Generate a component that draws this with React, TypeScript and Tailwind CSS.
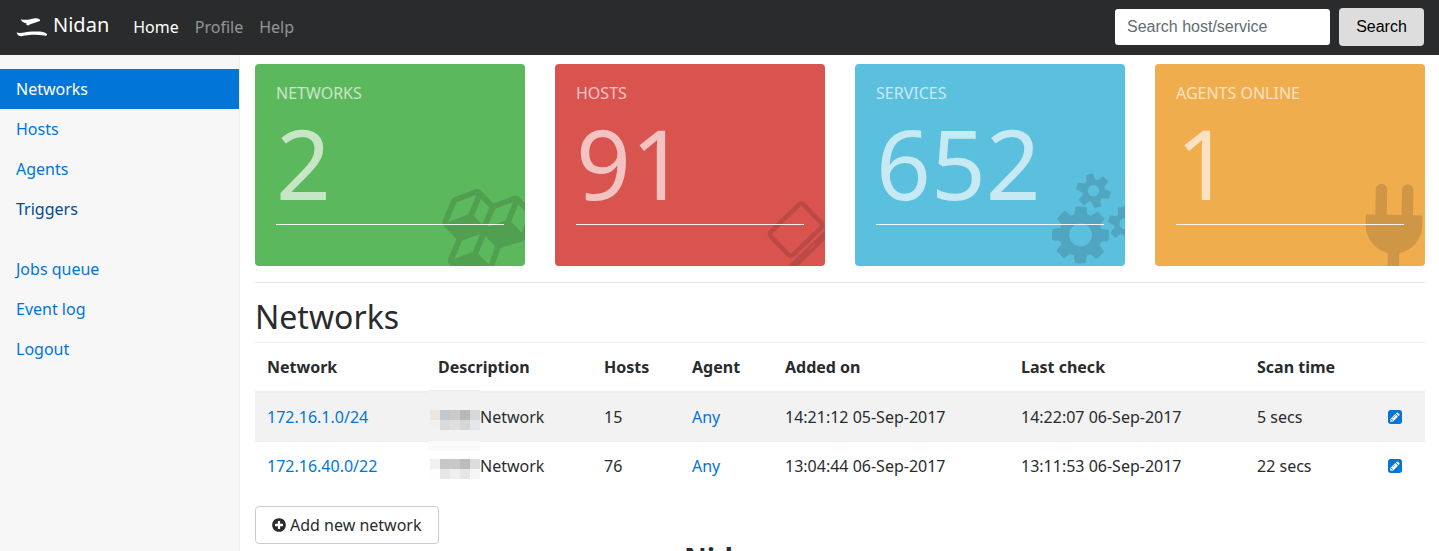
import React from "react";

const CUBES = "M640 1632l384-192v-314l-384 164v342zm-64-454l404-173-404-173-404 173zm1088 454l384-192v-314l-384 164v342zm-64-454l404-173-404-173-404 173zm-448-293l384-165v-266l-384 164v267zm-64-379l441-189-441-189-441 189zm1088 518v416q0 36-19 67t-52 47l-448 224q-25 14-57 14t-57-14l-448-224q-4-2-7-4-2 2-7 4l-448 224q-25 14-57 14t-57-14l-448-224q-33-16-52-47t-19-67v-416q0-38 21.5-70t56.5-48l434-186v-400q0-38 21.5-70t56.5-48l448-192q23-10 50-10t50 10l448 192q35 16 56.5 48t21.5 70v400l434 186q36 16 57 48t21 70z";
const LAPTOP = "M416 1280q-66 0-113-47t-47-113v-704q0-66 47-113t113-47h1088q66 0 113 47t47 113v704q0 66-47 113t-113 47h-1088zm-32-864v704q0 13 9.5 22.5t22.5 9.5h1088q13 0 22.5-9.5t9.5-22.5v-704q0-13-9.5-22.5t-22.5-9.5h-1088q-13 0-22.5 9.5t-9.5 22.5zm1376 928h160v96q0 40-47 68t-113 28h-1600q-66 0-113-28t-47-68v-96h1760zm-720 96q16 0 16-16t-16-16h-160q-16 0-16 16t16 16h160z";
const COGS = "M896 896q0-106-75-181t-181-75-181 75-75 181 75 181 181 75 181-75 75-181zm768 512q0-52-38-90t-90-38-90 38-38 90q0 53 37.5 90.5t90.5 37.5 90.5-37.5 37.5-90.5zm0-1024q0-52-38-90t-90-38-90 38-38 90q0 53 37.5 90.5t90.5 37.5 90.5-37.5 37.5-90.5zm-384 421v185q0 10-7 19.5t-16 10.5l-155 24q-11 35-32 76 34 48 90 115 7 11 7 20 0 12-7 19-23 30-82.5 89.5t-78.5 59.5q-11 0-21-7l-115-90q-37 19-77 31-11 108-23 155-7 24-30 24h-186q-11 0-20-7.5t-10-17.5l-23-153q-34-10-75-31l-118 89q-7 7-20 7-11 0-21-8-144-133-144-160 0-9 7-19 10-14 41-53t47-61q-23-44-35-82l-152-24q-10-1-17-9.5t-7-19.5v-185q0-10 7-19.5t16-10.5l155-24q11-35 32-76-34-48-90-115-7-11-7-20 0-12 7-20 22-30 82-89t79-59q11 0 21 7l115 90q34-18 77-32 11-108 23-154 7-24 30-24h186q11 0 20 7.5t10 17.5l23 153q34 10 75 31l118-89q8-7 20-7 11 0 21 8 144 133 144 160 0 8-7 19-12 16-42 54t-45 60q23 48 34 82l152 23q10 2 17 10.5t7 19.5zm640 533v140q0 16-149 31-12 27-30 52 51 113 51 138 0 4-4 7-122 71-124 71-8 0-46-47t-52-68q-20 2-30 2t-30-2q-14 21-52 68t-46 47q-2 0-124-71-4-3-4-7 0-25 51-138-18-25-30-52-149-15-149-31v-140q0-16 149-31 13-29 30-52-51-113-51-138 0-4 4-7 4-2 35-20t59-34 30-16q8 0 46 46.5t52 67.5q20-2 30-2t30 2q51-71 92-112l6-2q4 0 124 70 4 3 4 7 0 25-51 138 17 23 30 52 149 15 149 31zm0-1024v140q0 16-149 31-12 27-30 52 51 113 51 138 0 4-4 7-122 71-124 71-8 0-46-47t-52-68q-20 2-30 2t-30-2q-14 21-52 68t-46 47q-2 0-124-71-4-3-4-7 0-25 51-138-18-25-30-52-149-15-149-31v-140q0-16 149-31 13-29 30-52-51-113-51-138 0-4 4-7 4-2 35-20t59-34 30-16q8 0 46 46.5t52 67.5q20-2 30-2t30 2q51-71 92-112l6-2q4 0 124 70 4 3 4 7 0 25-51 138 17 23 30 52 149 15 149 31z";
const PLUG = "M1755 453q37 38 37 90.5t-37 90.5l-401 400 150 150-160 160q-163 163-389.5 186.5t-411.5-100.5l-362 362h-181v-181l362-362q-124-185-100.5-411.5t186.5-389.5l160-160 150 150 400-401q38-37 91-37t90 37 37 90.5-37 90.5l-400 401 234 234 401-400q38-37 91-37t90 37z";
const PLUS_CIRCLE = "M1344 960v-128q0-26-19-45t-45-19h-256v-256q0-26-19-45t-45-19h-128q-26 0-45 19t-19 45v256h-256q-26 0-45 19t-19 45v128q0 26 19 45t45 19h256v256q0 26 19 45t45 19h128q26 0 45-19t19-45v-256h256q26 0 45-19t19-45zm320-64q0 209-103 385.5t-279.5 279.5-385.5 103-385.5-103-279.5-279.5-103-385.5 103-385.5 279.5-279.5 385.5-103 385.5 103 279.5 279.5 103 385.5z";
const PENCIL_SQUARE = "M404 980l152 152-52 52h-56v-96h-96v-56zm414-390q14 13-3 30l-291 291q-17 17-30 3-14-13 3-30l291-291q17-17 30-3zm-274 690l544-544-288-288-544 544v288h288zm608-608l92-92q28-28 28-68t-28-68l-152-152q-28-28-68-28t-68 28l-92 92zm384-384v960q0 119-84.5 203.5t-203.5 84.5h-960q-119 0-203.5-84.5t-84.5-203.5v-960q0-119 84.5-203.5t203.5-84.5h960q119 0 203.5 84.5t84.5 203.5z";

const cards = [
  { label: "NETWORKS", value: "2", bg: "bg-[#5cb85c]", box: "0 0 2304 1792", path: CUBES, size: "h-[80px] w-[102.86px]" },
  { label: "HOSTS", value: "91", bg: "bg-[#d9534f]", box: "0 0 1920 1792", path: LAPTOP, size: "h-[64px] w-[68.57px]" },
  { label: "SERVICES", value: "652", bg: "bg-[#5bc0de]", box: "0 0 1920 1792", path: COGS, size: "h-[80px] w-[85.71px]" },
  { label: "AGENTS ONLINE", value: "1", bg: "bg-[#f0ad4e]", box: "0 0 1792 1792", path: PLUG, size: "h-[80px] w-[80px]" },
];

const rows = [
  {
    net: "172.16.1.0/24", hosts: "15", added: "14:21:12 05-Sep-2017", last: "14:22:07 06-Sep-2017", scan: "5 secs",
    mask: ["bg-[#ebe6e1]", "bg-[#c4c8cb]", "bg-[#c9cbcb]", "bg-[#b9b8b6]", "bg-[#d5d8dc]", "bg-[#f1f1f1]", "bg-[#d9dadb]", "bg-[#dfdfdd]", "bg-[#d6d6d6]", "bg-[#e4e6e9]"],
  },
  {
    net: "172.16.40.0/22", hosts: "76", added: "13:04:44 06-Sep-2017", last: "13:11:53 06-Sep-2017", scan: "22 secs",
    mask: ["bg-[#f2f1ec]", "bg-[#c3c9c8]", "bg-[#c7c8c8]", "bg-[#bdbcba]", "bg-[#dcdddd]", "bg-[#fefefe]", "bg-[#e7e7e7]", "bg-[#efefed]", "bg-[#e6e6e5]", "bg-[#f6f6f6]"],
  },
];

const COLS = "grid grid-cols-[171px_166px_88px_93px_236px_236px_131px_49px]";

function NavItem({ children, className = "" }: { children: string; className?: string }) {
  return <a className={`block h-10 px-4 pt-2 leading-6 ${className || "text-[#0275d8]"}`}>{children}</a>;
}

export default function App() {
  return (
    <div className="flex h-[551px] flex-col overflow-hidden bg-white font-['Noto_Sans',sans-serif] text-base leading-6 text-[#292b2c]">
      <header className="flex h-[55px] shrink-0 items-center bg-[#292b2c] pr-[15px] pl-4">
        <svg className="h-[20px] w-[32px] shrink-0" viewBox="0 0 32 20" fill="#fff">
          <path d="M4.6 1.2C8 2.3 13 1.8 17.5 .6C21 -.3 25 .8 23.8 3C20.5 4.6 15.5 5.2 12.2 7.4C10.6 7.2 9.6 6.4 10.8 5.2C8.6 5.4 6 4 4.6 1.2Z" />
          <path d="M.6 14.6C5 15.6 10 14 16 13.6C22 13.2 28.2 13.2 31 16C31.6 17.6 30.2 18 28 17.6C20 16.2 12 16.9 5.5 18.3C3.4 18.5 1 17.2 .6 14.6Z" />
        </svg>
        <span className="ml-[5px] pb-[5px] text-[20px] leading-[30px] text-white">Nidan</span>
        <nav className="ml-6 flex gap-4 pb-[2px]">
          <a className="text-white">Home</a>
          <a className="text-white/50">Profile</a>
          <a className="text-white/50">Help</a>
        </nav>
        <form className="ml-auto flex items-center gap-[9px] pb-[2px] font-['Liberation_Sans',sans-serif]">
          <input className="h-9 w-[215px] rounded-[3px] bg-white px-3 placeholder-[#636c72]" placeholder="Search host/service" />
          <button type="button" className="h-[38px] w-[85px] rounded bg-[#ddd] text-black">Search</button>
        </form>
      </header>

      <div className="flex min-h-0 flex-1">
        <aside className="w-[240px] shrink-0 border-r border-[#eee] bg-[#f7f7f7] pt-[14px]">
          <NavItem className="bg-[#0275d8] text-white">Networks</NavItem>
          <NavItem>Hosts</NavItem>
          <NavItem>Agents</NavItem>
          <NavItem className="mb-5 text-[#014c8c]">Triggers</NavItem>
          <NavItem>Jobs queue</NavItem>
          <NavItem>Event log</NavItem>
          <NavItem>Logout</NavItem>
        </aside>

        <main className="w-[1185px] shrink-0 pt-[9px] pl-[15px]">
          <div className="grid grid-cols-4 gap-[30px]">
            {cards.map((c) => (
              <section key={c.label} className={`relative h-[202px] overflow-hidden rounded ${c.bg} p-[21px]`}>
                <svg className={`absolute right-[-9px] bottom-px rotate-[-44deg] ${c.size}`} viewBox={c.box} fill="rgba(20,20,20,0.15)">
                  <path d={c.path} />
                </svg>
                <h6 className="relative mb-[7px] leading-[17.6px] text-white/65">{c.label}</h6>
                <div className="relative mb-[9px] text-[96px] leading-[105.6px] text-white/65">{c.value}</div>
                <div className="relative h-px bg-white/90" />
              </section>
            ))}
          </div>

          <hr className="mt-4 border-t border-[#e5e5e5]" />
          <h2 className="mt-4 h-[43px] text-[32px] leading-[35px]">Networks</h2>

          <div>
            <div className={`${COLS} h-[51px] border-t border-b-2 border-t-[#eceeef] border-b-[#eceeef] pt-3 font-bold`}>
              {["Network", "Description", "Hosts", "Agent", "Added on", "Last check", "Scan time"].map((h) => (
                <div key={h} className="pl-3">{h}</div>
              ))}
            </div>
            {rows.map((r, i) => (
              <div key={r.net} className={`${COLS} items-center ${i === 0 ? "h-[48px] bg-[#f2f2f2]" : "h-[49px] border-t border-[#eceeef]"}`}>
                <a className="pl-3 text-[#0275d8]">{r.net}</a>
                <div className="relative flex h-full items-center pl-1">
                  <div className={`absolute left-[2px] w-[52px] ${i === 0 ? "top-[-3px] h-[51px] bg-[#f2f2f2]" : "top-[-1px] h-[10px] bg-[#fafafa]"}`} />
                  <div className="relative grid grid-cols-5 pt-[6px]">
                    {r.mask.map((m, k) => (
                      <div key={k} className={`h-[10px] w-[10px] ${m}`} />
                    ))}
                  </div>
                  <span>Network</span>
                </div>
                <div className="pl-3">{r.hosts}</div>
                <a className="pl-3 text-[#0275d8]">Any</a>
                <div className="pl-3">{r.added}</div>
                <div className="pl-3">{r.last}</div>
                <div className="pl-3">{r.scan}</div>
                <a className="pl-3">
                  <svg className="h-[14px] w-[14px]" viewBox="0 0 1536 1536" fill="#0275d8"><path d={PENCIL_SQUARE} /></svg>
                </a>
              </div>
            ))}
          </div>

          <button type="button" className="mt-4 flex h-[38px] w-[184px] items-center rounded border border-[#ccc] bg-white pl-[15px]">
            <svg className="h-4 w-4 shrink-0" viewBox="0 0 1792 1792"><path fill="#292b2c" d={PLUS_CIRCLE} /></svg>
            <span className="ml-[3px] whitespace-nowrap">Add new network</span>
          </button>
          <footer className="pl-[429px]">
            <h3 className="text-[28px] leading-[28px] font-bold">Nidan</h3>
          </footer>
        </main>
      </div>
    </div>
  );
}
